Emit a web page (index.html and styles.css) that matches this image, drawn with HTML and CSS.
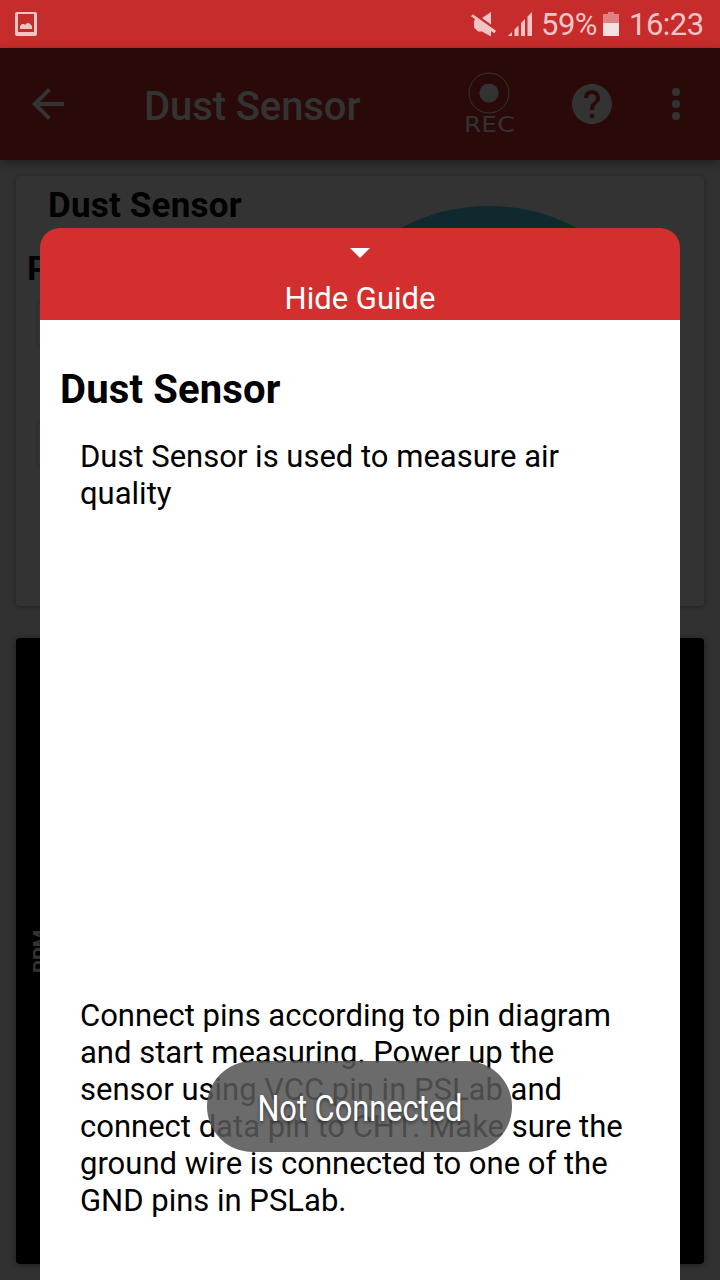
FILE: index.html
```html
<!DOCTYPE html>
<html lang="en">
<head>
<meta charset="utf-8">
<title>Dust Sensor</title>
<link rel="stylesheet" href="styles.css">
</head>
<body>
<div class="screen">
  <header class="status">
    <svg class="picture-icon" width="24" height="26" viewBox="0 0 24 26"><path fill="#f2c4c5" fill-rule="evenodd" d="M3 1h18a2 2 0 0 1 2 2v20a2 2 0 0 1-2 2H3a2 2 0 0 1-2-2V3a2 2 0 0 1 2-2zm1 2v18h16V3z"/><path fill="#f2c4c5" d="M6 18v-3l2-2h2l1 1 2-2h2l3 3v3z"/></svg>
    <div class="status-right">
      <svg class="mute" width="26" height="26" viewBox="0 0 26 26"><path fill="#f2c4c5" d="M1.800 3.200 25 19.800 23.300 22.200 20 20V25.500l-9-5H7l-4-4v-6l1-2.500L0 5.200zM20 1v12.500l-9-6.500z"/></svg>
      <svg class="signal" width="26" height="26" viewBox="0 0 26 26"><path fill="#f2c4c5" d="M0 25l4-4v4zM6.500 18.500l4-4V25h-4zM13 12l4-4v17h-4zM19.500 5.500 24 1v24h-4.500z"/></svg>
      <span class="percent">59%</span>
      <svg class="battery" width="16" height="26" viewBox="0 0 16 26"><path fill="#df8081" d="M0 3h5V1h6v2h5v9H0z"/><path fill="#f6dfdf" d="M0 12h16v13H0z"/></svg>
      <span class="clock">16:23</span>
    </div>
  </header>
  <nav class="toolbar">
    <svg class="back" width="32" height="32" viewBox="4 4 16 16"><path fill="#333" d="M20 11H7.830l5.590-5.590L12 4l-8 8 8 8 1.410-1.410L7.830 13H20z"/></svg>
    <h1 class="title">Dust Sensor</h1>
    <div class="record">
      <svg width="42" height="42" viewBox="0 0 42 42"><circle cx="21" cy="21" r="20" fill="none" stroke="#333"/><circle cx="21" cy="21" r="9.600" fill="#333"/></svg>
      <span class="rec-label">REC</span>
    </div>
    <svg class="help" width="40" height="40" viewBox="2 2 20 20"><path fill="#333" d="M12 2C6.480 2 2 6.480 2 12s4.480 10 10 10 10-4.480 10-10S17.520 2 12 2zm1 17h-2v-2h2v2zm2.070-7.750-.9.920C13.450 12.900 13 13.500 13 15h-2v-.5c0-1.100.45-2.100 1.170-2.830l1.240-1.260c.37-.36.59-.86.59-1.410 0-1.100-.9-2-2-2s-2 .9-2 2H8c0-2.210 1.790-4 4-4s4 1.790 4 4c0 .88-.36 1.680-.93 2.250z"/></svg>
    <svg class="more" width="8" height="32" viewBox="0 0 8 32"><circle cx="4" cy="4" r="4" fill="#333"/><circle cx="4" cy="16" r="4" fill="#333"/><circle cx="4" cy="28" r="4" fill="#333"/></svg>
  </nav>
  <main class="content">
    <section class="card">
      <svg class="gauge" width="400" height="60" viewBox="0 0 400 60"><circle cx="200" cy="187" r="187" fill="#10292f"/></svg>
      <h2 class="card-title">Dust Sensor</h2>
      <div class="ppm-label">PPM</div>
      <div class="field"></div>
      <div class="field second"></div>
    </section>
    <section class="chart"><span class="axis">PPM</span></section>
  </main>
  <article class="guide">
    <div class="guide-head">
      <svg width="20" height="10" viewBox="0 0 20 10"><path fill="#fff" d="M0 0h20L10 10z"/></svg>
      <span class="hide">Hide Guide</span>
    </div>
    <div class="guide-body">
      <h2 class="guide-title">Dust Sensor</h2>
      <p class="intro">Dust Sensor is used to measure air<br>quality</p>
      <p class="steps">Connect pins according to pin diagram<br>and start measuring. Power up the<br>sensor using VCC pin in PSLab and<br>connect data pin to CH1. Make sure the<br>ground wire is connected to one of the<br>GND pins in PSLab.</p>
    </div>
  </article>
  <div class="toast"><span class="toast-text">Not Connected</span></div>
</div>
</body>
</html>
```
FILE: styles.css
```css
* { box-sizing: border-box; }
body, h1, h2, p { margin: 0; }
body { font-family: Roboto, "Liberation Sans", sans-serif; color: #000; background: #323232; }
.screen { position: relative; width: 720px; height: 1280px; overflow: hidden; background: #313131; }
svg { display: block; flex: none; }
span, h1, h2, p { white-space: nowrap; }

.status { height: 48px; padding: 0 16px 0 14px; display: flex; align-items: center; justify-content: space-between; background: #c62c2c; color: #f2c4c5; }
.status-right { display: flex; align-items: center; font-size: 31px; line-height: 48px; }
.mute { margin-right: 1px; }
.signal { margin-left: 10px; }
.percent { margin-left: 7px; width: 56px; padding-top: 2px; letter-spacing: -.5px; }
.battery { margin-left: 6px; }
.clock { margin-left: 10px; width: 75px; padding-top: 2px; letter-spacing: -.5px; }

.toolbar { position: relative; height: 112px; padding-left: 32px; display: flex; align-items: center; background: #290a09; color: #333; box-shadow: 0 3px 8px rgba(0, 0, 0, .35); }
.title { margin: 6px 0 0 80px; width: 220px; font-size: 40px; font-weight: 500; line-height: 48px; letter-spacing: -.1px; }
.record { width: 50px; height: 64px; margin-left: 100px; display: flex; flex-direction: column; align-items: center; }
.rec-label { font: 22px/22px "DejaVu Sans", sans-serif; transform: scaleX(1.14); }
.help { margin-left: 58px; }
.more { margin-left: 60px; }

.content { padding: 16px; }
.card { position: relative; height: 430px; border-radius: 4px; background: #333; box-shadow: 0 1px 5px rgba(0, 0, 0, .3); overflow: hidden; }
.gauge { position: absolute; left: 273px; top: 30px; }
.card-title { padding: 9px 0 0 32px; font-size: 35px; line-height: 42px; letter-spacing: .2px; }
.ppm-label { padding: 21px 0 0 11px; font-size: 34px; line-height: 40px; font-weight: 700; }
.field { width: 120px; height: 56px; margin: 8px 0 0 20px; border: 2px solid #362b2e; border-radius: 10px; }
.second { margin-top: 64px; }
.chart { height: 626px; margin-top: 32px; border-radius: 4px; background: #000; padding: 291px 0 0 14px; box-shadow: 0 1px 6px rgba(0, 0, 0, .4); }
.axis { display: block; writing-mode: vertical-rl; transform: rotate(180deg); width: 22px; height: 44px; font-size: 20px; line-height: 22px; font-weight: 700; color: #333; }

.guide { position: absolute; left: 40px; top: 228px; width: 640px; height: 1052px; }
.guide-head { height: 92px; padding-top: 20px; display: flex; flex-direction: column; align-items: center; background: #d32f2f; color: #fff; border-radius: 20px 20px 0 0; }
.guide-body { height: 960px; background: #fff; }
.hide { margin-top: 22px; font-size: 31px; line-height: 37px; }
.guide-title { padding: 46px 0 0 20px; font-size: 40px; line-height: 48px; letter-spacing: .15px; }
.intro, .steps { padding-left: 40px; font-size: 31px; line-height: 37px; }
.intro { padding-top: 24px; }
.steps { padding-top: 485px; }
.toast { position: absolute; left: 207px; top: 1061px; width: 305px; height: 91px; border-radius: 46px; background: rgba(86, 86, 86, .875); display: flex; align-items: center; justify-content: center; color: #fff; }
.toast-text { margin-top: 4px; font-size: 36px; line-height: 42px; transform: scaleX(.855); text-shadow: 0 2px 4px rgba(0, 0, 0, .5); }
```
